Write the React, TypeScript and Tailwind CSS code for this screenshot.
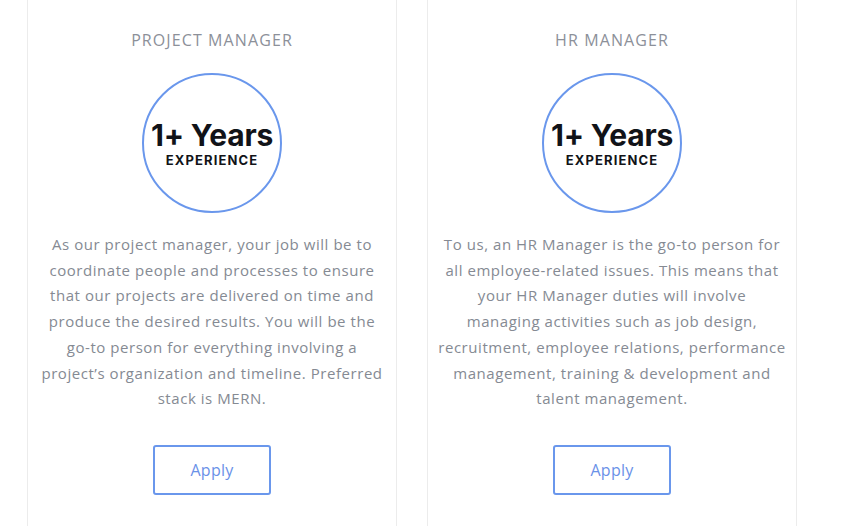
import React from 'react';

type Job = {
  id: string;
  title: string;
  lines: string[];
};

const jobs: Job[] = [
  {
    id: 'pm',
    title: 'Project Manager',
    lines: [
      'As our project manager, your job will be to',
      'coordinate people and processes to ensure',
      'that our projects are delivered on time and',
      'produce the desired results. You will be the',
      'go-to person for everything involving a',
      'project’s organization and timeline. Preferred',
      'stack is MERN.',
    ],
  },
  {
    id: 'hr',
    title: 'HR Manager',
    lines: [
      'To us, an HR Manager is the go-to person for',
      'all employee-related issues. This means that',
      'your HR Manager duties will involve',
      'managing activities such as job design,',
      'recruitment, employee relations, performance',
      'management, training & development and',
      'talent management.',
    ],
  },
];

const JobCard: React.FC<{ job: Job }> = ({ job }) => (
  <div className="w-[370px] h-full border-x border-[#ececec] bg-white flex flex-col items-center px-[8px] pt-[30px]">
    <h3 className="text-[16px] leading-[20px] uppercase text-[#8c9099] font-['Open_Sans',sans-serif] tracking-[1.1px]">
      {job.title}
    </h3>

    <div className="mt-[23px] w-[140px] h-[140px] rounded-full border-2 border-[#6a97ec] flex flex-col items-center justify-center gap-[3px] font-['Inter',sans-serif] text-[#111318]">
      <div className="text-[30px] leading-[30px] font-bold tracking-[-0.2px]">1+ Years</div>
      <div className="text-[13px] leading-[14px] font-bold tracking-[1.1px]">EXPERIENCE</div>
    </div>

    <p className="mt-[19px] text-center text-[15px] leading-[25.7px] text-[#858a93] font-['Open_Sans',sans-serif] tracking-[0.55px] whitespace-nowrap">
      {job.lines.map((line, i) => (
        <React.Fragment key={i}>
          {line}
          {i < job.lines.length - 1 && <br />}
        </React.Fragment>
      ))}
    </p>

    <button className="mt-[33px] w-[118px] h-[50px] border-2 border-[#6a97ec] rounded-[3px] text-[16px] text-[#6a91e8] font-['Open_Sans',sans-serif] tracking-[0.3px]">
      Apply
    </button>
  </div>
);

export default function App() {
  return (
    <div className="w-[854px] h-[526px] overflow-hidden bg-white flex gap-[30px] pl-[27px]">
      {jobs.map((job) => (
        <JobCard key={job.id} job={job} />
      ))}
    </div>
  );
}
